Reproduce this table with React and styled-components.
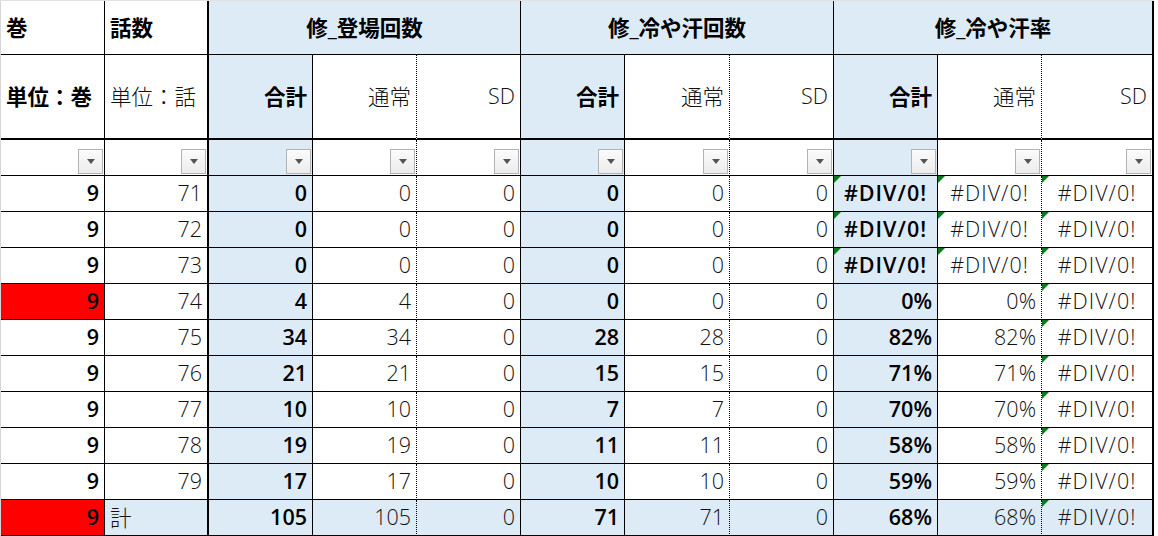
import React from "react";
import styled, { createGlobalStyle, css } from "styled-components";

const GlobalStyle = createGlobalStyle`
  body {
    margin: 0;
    background: #fff;
  }
`;

const BLUE = "#ddebf7";
const RED = "#ff0000";

const edges = {
  thin: "1px solid #000",
  dotted: "1px dotted #000",
  thick: "2px solid #000",
};

const Sheet = styled.div`
  display: grid;
  grid-template-columns: 104px 104px 104px 104px 104px 104px 105px 104px 104px 104px 112px;
  grid-template-rows: 54px 85px 36px repeat(10, 36px);
  width: max-content;
  border-left: 1px solid #d6d6d6;
  border-top: 1px solid #e2e2e2;
  font-family: "Open Sans", "Noto Sans CJK JP", sans-serif;
  font-size: 21.5px;
  color: #000;
`;

const Cell = styled.div`
  position: relative;
  box-sizing: border-box;
  display: flex;
  align-items: center;
  padding: 0 5px 2px 5px;
  white-space: nowrap;
  overflow: hidden;
  grid-column: ${({ $span }) => ($span ? `span ${$span}` : "auto")};
  justify-content: ${({ $align }) =>
    $align === "left" ? "flex-start" : $align === "center" ? "center" : "flex-end"};
  border-right: ${({ $edge }) => edges[$edge || "thin"]};
  border-bottom: ${({ $under }) => edges[$under || "thin"]};
  background: ${({ $bg }) => $bg || "#fff"};
  font-weight: ${({ $bold }) => ($bold ? 600 : 300)};
  color: ${({ $bold }) => ($bold ? "#000" : "#111")};

  ${({ $flag }) =>
    $flag &&
    css`
      letter-spacing: 1px;

      &::before {
        content: "";
        position: absolute;
        top: 0;
        left: 0;
        border-top: 7px solid #0b7a1e;
        border-right: 7px solid transparent;
      }
    `}
`;

const FilterCell = styled(Cell)`
  align-items: flex-end;
  padding: 0 1px 1px 0;
`;

const DropButton = styled.span`
  box-sizing: border-box;
  width: 25px;
  height: 25px;
  display: flex;
  align-items: center;
  justify-content: center;
  border: 1px solid #b3b3b3;
  background: linear-gradient(#fbfbfb, #ececec);

  &::after {
    content: "";
    border-top: 5px solid #555;
    border-left: 4.5px solid transparent;
    border-right: 4.5px solid transparent;
  }
`;

const columns = [
  { edge: "thin" },
  { edge: "thick" },
  { edge: "thin", sum: true },
  { edge: "dotted" },
  { edge: "thin" },
  { edge: "thin", sum: true },
  { edge: "dotted" },
  { edge: "thin" },
  { edge: "thin", sum: true },
  { edge: "dotted" },
  { edge: "thick" },
];

const groups = [
  { title: "修_登場回数", edge: "thin" },
  { title: "修_冷や汗回数", edge: "thin" },
  { title: "修_冷や汗率", edge: "thick" },
];

const ERR = "#DIV/0!";

const rows = [
  ["9", "71", "0", "0", "0", "0", "0", "0", ERR, ERR, ERR],
  ["9", "72", "0", "0", "0", "0", "0", "0", ERR, ERR, ERR],
  ["9", "73", "0", "0", "0", "0", "0", "0", ERR, ERR, ERR],
  ["9", "74", "4", "4", "0", "0", "0", "0", "0%", "0%", ERR],
  ["9", "75", "34", "34", "0", "28", "28", "0", "82%", "82%", ERR],
  ["9", "76", "21", "21", "0", "15", "15", "0", "71%", "71%", ERR],
  ["9", "77", "10", "10", "0", "7", "7", "0", "70%", "70%", ERR],
  ["9", "78", "19", "19", "0", "11", "11", "0", "58%", "58%", ERR],
  ["9", "79", "17", "17", "0", "10", "10", "0", "59%", "59%", ERR],
  ["9", "計", "105", "105", "0", "71", "71", "0", "68%", "68%", ERR],
];

const redRows = [3, 9];

const subHeads = ["合計", "通常", "SD"];

export default function App() {
  return (
    <>
      <GlobalStyle />
      <Sheet>
        <Cell $align="left" $bold>巻</Cell>
        <Cell $align="left" $bold $edge="thick">話数</Cell>
        {groups.map((g) => (
          <Cell key={g.title} $span={3} $align="center" $bold $bg={BLUE} $edge={g.edge}>
            {g.title}
          </Cell>
        ))}

        <Cell $align="left" $bold $under="thick">単位：巻</Cell>
        <Cell $align="left" $edge="thick" $under="thick">単位：話</Cell>
        {columns.slice(2).map((c, i) => (
          <Cell
            key={i}
            $edge={c.edge}
            $under="thick"
            $bold={c.sum}
            $bg={c.sum ? BLUE : undefined}
          >
            {subHeads[i % 3]}
          </Cell>
        ))}

        {columns.map((c, i) => (
          <FilterCell key={i} $edge={c.edge} $bg={c.sum ? BLUE : undefined}>
            <DropButton />
          </FilterCell>
        ))}

        {rows.map((row, r) => {
          const total = r === rows.length - 1;
          return row.map((v, i) => {
            const c = columns[i];
            const isErr = v === ERR;
            let bg;
            if (i === 0 && redRows.includes(r)) bg = RED;
            else if (total || c.sum) bg = BLUE;
            return (
              <Cell
                key={`${r}-${i}`}
                $edge={c.edge}
                $bg={bg}
                $bold={i === 0 || c.sum}
                $align={isErr ? "center" : i === 1 && total ? "left" : "right"}
                $flag={isErr}
              >
                {v}
              </Cell>
            );
          });
        })}
      </Sheet>
    </>
  );
}
